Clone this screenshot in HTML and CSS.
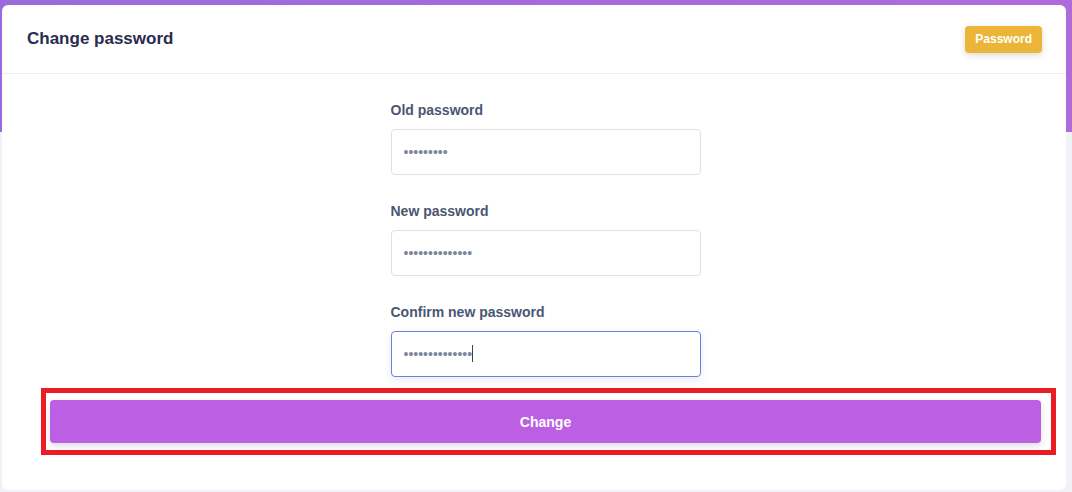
FILE: index.html
```html
<!DOCTYPE html>
<html lang="en">
<head>
<meta charset="utf-8">
<title>Change password</title>
<link rel="stylesheet" href="styles.css">
</head>
<body>
<div class="card">
  <div class="card-header">
    <h1 class="title">Change password</h1>
    <span class="badge">Password</span>
  </div>
  <form class="card-body">
    <div class="fields">
      <div class="group">
        <label class="label" for="old">Old password</label>
        <input class="input" id="old" type="password" value="123456789">
      </div>
      <div class="group">
        <label class="label" for="new">New password</label>
        <input class="input" id="new" type="password" value="12345678901234">
      </div>
      <div class="group">
        <label class="label" for="confirm">Confirm new password</label>
        <div class="input-wrap">
          <input class="input input-focus" id="confirm" type="password" value="12345678901234">
          <span class="caret"></span>
        </div>
      </div>
    </div>
    <div class="action">
      <button class="btn" type="button">Change</button>
    </div>
  </form>
</div>
</body>
</html>
```
FILE: styles.css
```css
html, body {
  margin: 0;
  padding: 0;
}
body {
  font-family: "Liberation Sans", Arial, sans-serif;
  background:
    linear-gradient(to right, #9a6bdc, #b06bdb) top left / 100% 132px no-repeat,
    #f1f1f8;
  height: 492px;
  overflow: hidden;
  padding: 5px 6px 0 2px;
  box-sizing: border-box;
}
.card {
  background: #fff;
  border-radius: 6px;
  height: 485px;
}
.card-header {
  height: 69px;
  box-sizing: border-box;
  border-bottom: 1px solid #ececf1;
  display: flex;
  align-items: center;
  justify-content: space-between;
  padding: 0 24px 0 25px;
}
.title {
  margin: 0;
  font-size: 17px;
  font-weight: 700;
  color: #2a2c50;
}
.badge {
  background: #ebb537;
  color: #fff;
  font-size: 12px;
  font-weight: 700;
  height: 27px;
  line-height: 27px;
  padding: 0 10px;
  border-radius: 4px;
  box-shadow: 0 2px 6px rgba(60, 50, 20, 0.18);
}
.card-body {
  margin: 0;
  padding: 26px 25px 0 48px;
}
.fields {
  width: 310px;
  margin: 0 auto;
  display: flex;
  flex-direction: column;
  gap: 26px;
}
.group {
  display: flex;
  flex-direction: column;
}
.label {
  font-size: 14px;
  line-height: 20px;
  font-weight: 700;
  color: #4b5673;
  margin-bottom: 9px;
}
.input-wrap {
  position: relative;
  display: flex;
  flex-direction: column;
}
.input {
  height: 46px;
  box-sizing: border-box;
  border: 1px solid #dfe1e7;
  border-radius: 4px;
  padding: 0 12px;
  font-family: "Liberation Sans", Arial, sans-serif;
  font-size: 14px;
  color: #7b879c;
  background: #fff;
  outline: none;
}
.input-focus {
  border-color: #6b7fe2;
  box-shadow: 0 3px 8px rgba(80, 80, 140, 0.12);
}
.caret {
  position: absolute;
  left: 81px;
  top: 14px;
  width: 1px;
  height: 17px;
  background: #3a3f55;
}
.action {
  margin-top: 23px;
  position: relative;
}
.action::after {
  content: "";
  position: absolute;
  left: -9px;
  top: -12px;
  right: -15px;
  bottom: -12px;
  border: 5px solid #ec1c24;
  pointer-events: none;
}
.btn {
  display: block;
  width: 100%;
  height: 43px;
  border: 0;
  border-radius: 4px;
  background: #bd5fe3;
  color: #fff;
  font-family: "Liberation Sans", Arial, sans-serif;
  font-size: 14px;
  font-weight: 700;
  box-shadow: 0 3px 6px rgba(60, 40, 90, 0.16);
  cursor: pointer;
}
```
